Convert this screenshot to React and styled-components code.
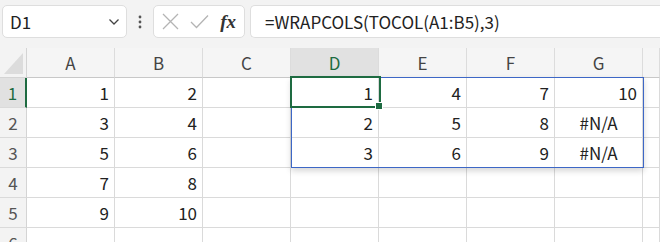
import React from "react";
import styled, { createGlobalStyle } from "styled-components";

const Global = createGlobalStyle`
  html, body { margin: 0; padding: 0; background: #ffffff; }
  body { font-family: "Noto Sans CJK JP", "Noto Sans", sans-serif; overflow: hidden; }
  * { box-sizing: border-box; }
`;

const Page = styled.div`
  width: 660px;
  height: 242px;
  display: flex;
  flex-direction: column;
  background: #f3f3f3;
  overflow: hidden;
`;

const FormulaBar = styled.div`
  height: 48px;
  flex-shrink: 0;
  display: flex;
  align-items: flex-start;
  padding: 5px 0 0 2px;
`;

const Box = styled.div`
  height: 33px;
  background: #ffffff;
  border: 1px solid #dedede;
  border-radius: 5px;
  display: flex;
  align-items: center;
`;

const NameBox = styled(Box)`
  width: 125px;
  padding: 0 6px 0 7px;
  justify-content: space-between;
  font-size: 17px;
  color: #222;
`;

const Dots = styled.div`
  width: 26px;
  height: 33px;
  display: flex;
  align-items: center;
  justify-content: center;
`;

const FnBox = styled(Box)`
  width: 92px;
  padding: 0 8px;
  justify-content: space-between;
`;

const FxLabel = styled.span`
  font-family: "Liberation Serif", "DejaVu Serif", serif;
  font-style: italic;
  font-weight: bold;
  font-size: 19px;
  color: #333;
`;

const FormulaBox = styled(Box)`
  flex: 1;
  margin-left: 5px;
  border-right: none;
  border-radius: 5px 0 0 5px;
  padding-left: 14px;
  font-size: 17px;
  color: #222;
`;

const Sheet = styled.div`
  position: relative;
  flex: 1;
  min-height: 0;
  display: grid;
  grid-template-columns: 27px repeat(7, 88px) 1fr;
  grid-template-rows: 30px;
  grid-auto-rows: 30px;
  background: #ffffff;
`;

const Corner = styled.div`
  background: #f3f3f3;
  border-right: 1px solid #d4d4d4;
  border-bottom: 1px solid #d4d4d4;
  position: relative;
  &::after {
    content: "";
    position: absolute;
    right: 3px;
    bottom: 3px;
    width: 0;
    height: 0;
    border-left: 19px solid transparent;
    border-bottom: 21px solid #dcdcdc;
  }
`;

const ColHead = styled.div`
  background: ${(p) => (p.$active ? "#e1e1e1" : "#f5f5f5")};
  color: ${(p) => (p.$active ? "#1e6b41" : "#444")};
  border-right: 1px solid #dcdcdc;
  border-bottom: 1px solid ${(p) => (p.$active ? "#1e6b41" : "#c8c8c8")};
  display: flex;
  align-items: center;
  justify-content: center;
  font-size: 17px;
`;

const RowHead = styled.div`
  background: ${(p) => (p.$active ? "#e1e1e1" : "#f3f3f3")};
  color: ${(p) => (p.$active ? "#1e6b41" : "#555")};
  border-right: ${(p) => (p.$active ? "2px solid #1e6b41" : "1px solid #d4d4d4")};
  border-bottom: 1px solid #dadada;
  display: flex;
  align-items: center;
  justify-content: center;
  font-size: 17px;
`;

const Cell = styled.div`
  border-right: 1px solid #dadada;
  border-bottom: 1px solid #dadada;
  display: flex;
  align-items: center;
  justify-content: ${(p) => (p.$align === "center" ? "center" : "flex-end")};
  padding-right: ${(p) => (p.$align === "center" ? "0" : "5px")};
  font-size: 17px;
  color: #222;
`;

const SpillRange = styled.div`
  position: absolute;
  left: 291px;
  top: 29px;
  width: 353px;
  height: 91px;
  border: 1px solid #3d67c6;
  box-shadow: 0 3px 6px rgba(0, 0, 0, 0.16);
  pointer-events: none;
`;

const ActiveCell = styled.div`
  position: absolute;
  left: 290px;
  top: 28px;
  width: 91px;
  height: 32px;
  border: 2px solid #1e6b41;
  pointer-events: none;
  &::after {
    content: "";
    position: absolute;
    right: -4px;
    bottom: -4px;
    width: 6px;
    height: 6px;
    background: #1e6b41;
    border: 1px solid #ffffff;
  }
`;

const cols = ["A", "B", "C", "D", "E", "F", "G", ""];
const data = [
  ["1", "2", "", "1", "4", "7", "10", ""],
  ["3", "4", "", "2", "5", "8", "#N/A", ""],
  ["5", "6", "", "3", "6", "9", "#N/A", ""],
  ["7", "8", "", "", "", "", "", ""],
  ["9", "10", "", "", "", "", "", ""],
  ["", "", "", "", "", "", "", ""],
];

export default function App() {
  return (
    <Page>
      <Global />
      <FormulaBar>
        <NameBox>
          <span>D1</span>
          <svg width="12" height="8" viewBox="0 0 12 8">
            <path d="M1.5 1.5 L6 6 L10.5 1.5" fill="none" stroke="#444" strokeWidth="1.3" />
          </svg>
        </NameBox>
        <Dots>
          <svg width="4" height="14" viewBox="0 0 4 14">
            <circle cx="2" cy="2" r="1.4" fill="#555" />
            <circle cx="2" cy="7" r="1.4" fill="#555" />
            <circle cx="2" cy="12" r="1.4" fill="#555" />
          </svg>
        </Dots>
        <FnBox>
          <svg width="17" height="17" viewBox="0 0 17 17">
            <path d="M1 1 L16 16 M16 1 L1 16" stroke="#b4b4b4" strokeWidth="1.3" />
          </svg>
          <svg width="19" height="15" viewBox="0 0 19 15">
            <path d="M1 8 L6.5 13.5 L18 1.5" fill="none" stroke="#b4b4b4" strokeWidth="1.3" />
          </svg>
          <FxLabel>fx</FxLabel>
        </FnBox>
        <FormulaBox>=WRAPCOLS(TOCOL(A1:B5),3)</FormulaBox>
      </FormulaBar>
      <Sheet>
        <Corner />
        {cols.map((c, i) => (
          <ColHead key={"h" + i} $active={c === "D"}>
            {c}
          </ColHead>
        ))}
        {data.map((row, r) => (
          <React.Fragment key={"r" + r}>
            <RowHead $active={r === 0}>{r + 1}</RowHead>
            {row.map((v, c) => (
              <Cell key={c} $align={v === "#N/A" ? "center" : "right"}>
                {v}
              </Cell>
            ))}
          </React.Fragment>
        ))}
        <SpillRange />
        <ActiveCell />
      </Sheet>
    </Page>
  );
}
